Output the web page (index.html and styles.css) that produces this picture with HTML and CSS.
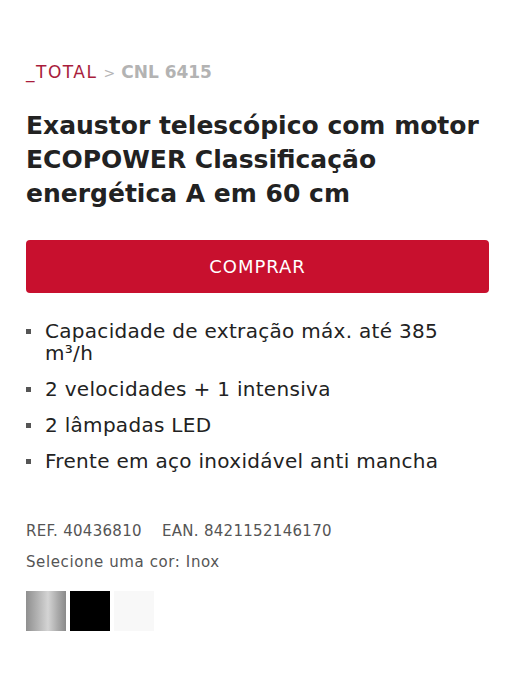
FILE: index.html
```html
<!DOCTYPE html>
<html>
<head>
    <meta name="viewport" content="width=device-width, initial-scale=1.0">
    <title>CNL 6415</title>
    <link rel="stylesheet" href="styles.css">
</head>
<body>
    <div class="product">
        <div class="breadcrumb">
            <a href="#">_TOTAL</a>
            <span class="sep">&gt;</span>
            <span class="current">CNL 6415</span>
        </div>

        <h1>Exaustor telescópico com motor ECOPOWER Classificação energética A em 60 cm</h1>

        <button class="buy">COMPRAR</button>

        <ul class="features">
            <li>Capacidade de extração máx. até 385 m³/h</li>
            <li>2 velocidades + 1 intensiva</li>
            <li>2 lâmpadas LED</li>
            <li>Frente em aço inoxidável anti mancha</li>
        </ul>

        <div class="codes">
            <span>REF. 40436810</span>
            <span>EAN. 8421152146170</span>
        </div>
        <div class="color-label">Selecione uma cor: Inox</div>

        <div class="swatches">
            <div class="swatch inox"></div>
            <div class="swatch black"></div>
            <div class="swatch white"></div>
        </div>
    </div>
</body>
</html>
```

FILE: styles.css
```css
body {
    margin: 0;
    background: #fff;
    font-family: "DejaVu Sans", sans-serif;
    color: #222;
}
.product {
    padding: 60px 24px 40px 26px;
}
.breadcrumb {
    font-size: 17px;
    line-height: 24px;
    display: flex;
    gap: 6px;
    align-items: baseline;
}
.breadcrumb a {
    color: #a91d3c;
    text-decoration: none;
    letter-spacing: 1.5px;
}
.breadcrumb .sep {
    color: #b5b5b5;
    font-size: 14px;
}
.breadcrumb .current {
    color: #b3b3b3;
    font-weight: bold;
}
h1 {
    font-size: 25px;
    line-height: 34px;
    font-weight: bold;
    color: #222;
    margin: 24px 0 29px 0;
}
.buy {
    display: block;
    width: 100%;
    height: 53px;
    background: #c8102e;
    color: #fff;
    border: none;
    border-radius: 4px;
    font-family: inherit;
    font-size: 18px;
    letter-spacing: 1px;
    cursor: pointer;
}
.features {
    list-style: none;
    padding: 0 30px 0 0;
    margin: 27px 0 0 0;
}
.features li {
    position: relative;
    padding-left: 19px;
    font-size: 20px;
    letter-spacing: 0.3px;
    line-height: 22px;
    margin-bottom: 14px;
}
.features li::before {
    content: "";
    position: absolute;
    left: 0;
    top: 9px;
    width: 5px;
    height: 5px;
    background: #555;
}
.codes {
    margin-top: 49px;
    font-size: 15px;
    letter-spacing: 0.3px;
    line-height: 20px;
    color: #555;
    display: flex;
    gap: 20px;
}
.color-label {
    margin-top: 11px;
    font-size: 15px;
    letter-spacing: 0.6px;
    line-height: 20px;
    color: #555;
}
.swatches {
    display: flex;
    gap: 4px;
    margin-top: 19px;
}
.swatch {
    width: 40px;
    height: 40px;
}
.swatch.inox {
    background: linear-gradient(90deg, #8f8f8f 0%, #b4b4b4 30%, #d4d4d4 55%, #a9a9a9 80%, #8a8a8a 100%);
}
.swatch.black {
    background: #000;
}
.swatch.white {
    background: #f8f8f8;
}
```
